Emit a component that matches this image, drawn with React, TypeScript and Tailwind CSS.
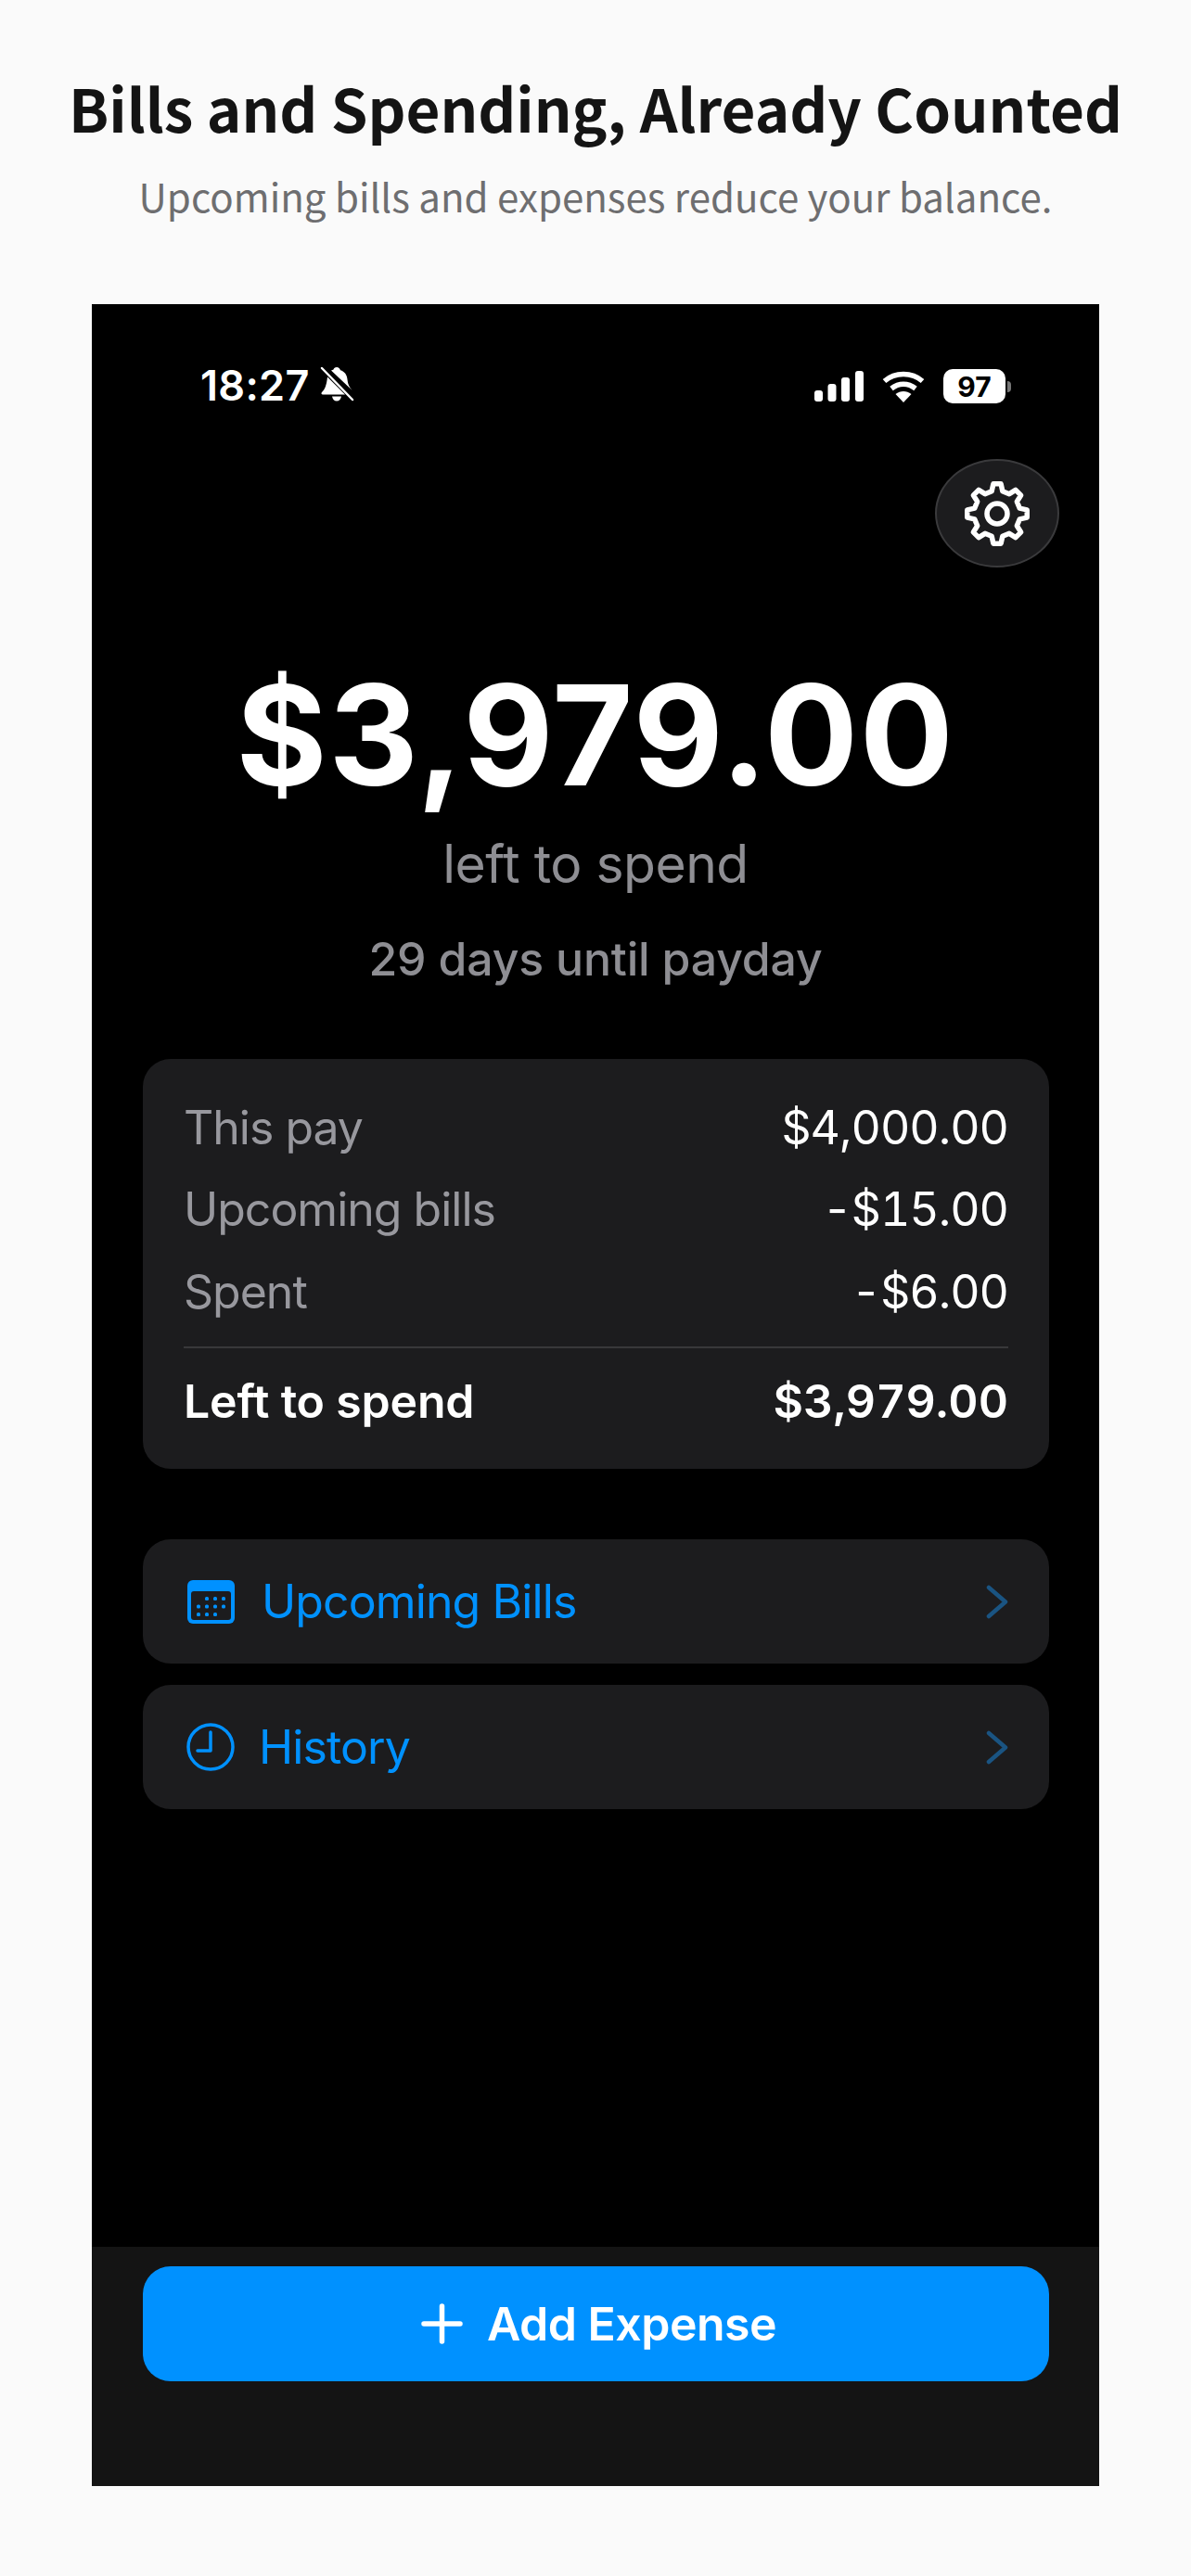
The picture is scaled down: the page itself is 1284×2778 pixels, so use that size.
import React from "react";

const gearPath = (() => {
  const teeth = 8, outer = 32.500, inner = 25, cx = 35, cy = 35;
  const pts: string[] = [];
  for (let i = 0; i < teeth; i++) {
    const a = (i * 2 * Math.PI) / teeth - Math.PI / 2;
    const step = (2 * Math.PI) / teeth;
    const p = (r: number, t: number) => `${(cx + r * Math.cos(t)).toFixed(2)} ${(cy + r * Math.sin(t)).toFixed(2)}`;
    pts.push(`${i === 0 ? "M" : "L"}${p(inner, a - step * 0.3)}`);
    pts.push(`L${p(outer, a - step * 0.16)}`);
    pts.push(`L${p(outer, a + step * 0.16)}`);
    pts.push(`L${p(inner, a + step * 0.3)}`);
  }
  return pts.join(" ") + " Z";
})();

const Gear = () => (
  <svg width="70" height="70" viewBox="0 0 70 70" fill="none" stroke="#fff" strokeWidth="5.500" strokeLinejoin="round">
    <path d={gearPath} />
    <circle cx="35" cy="35" r="11" />
  </svg>
);

const BellOff = () => (
  <svg width="37" height="38" viewBox="0 0 37 38">
    <path fill="#fff" d="M18 1c2 0 3.500 1.300 4 3.300 4.500 1.300 7 5 7.500 10 .4 5 2 8 5 11.500L12 4.500C13 4 14 3.800 14.500 3.500 15 2 16 1 18 1ZM8 11.500 27 30.500H3C1.500 30.500 1 29 2 28c3-3 5-7 6-16.500ZM13 32.500h10c-.5 3-2.500 5-5 5s-4.500-2-5-5Z" />
    <path stroke="#fff" strokeWidth="2.500" strokeLinecap="round" d="M2 2 35 36" />
  </svg>
);

const Signal = () => (
  <svg width="53" height="33" viewBox="0 0 53 33" fill="#fff">
    <rect x="0" y="21" width="9" height="12" rx="3" />
    <rect x="14.500" y="14" width="9" height="19" rx="3" />
    <rect x="29" y="7" width="9" height="26" rx="3" />
    <rect x="44" y="0" width="9" height="33" rx="3" />
  </svg>
);

const Wifi = () => (
  <svg width="46" height="34" viewBox="0 0 46 34" fill="none" stroke="#fff" strokeWidth="5.500">
    <path d="M2.500 11C14 1 32 1 43.500 11" />
    <path d="M10 19c8-6.500 18-6.500 26 0" />
    <path fill="#fff" stroke="none" d="M23 34 14.500 25c5-4 12-4 17 0Z" />
  </svg>
);

const Calendar = () => (
  <svg className="ml-[1px]" width="51" height="47" viewBox="0 0 51 47">
    <path fill="#0091ff" d="M6 0h39a6 6 0 0 1 6 6v35a6 6 0 0 1-6 6H6a6 6 0 0 1-6-6V6a6 6 0 0 1 6-6Z" />
    <rect x="4" y="12" width="43" height="31" rx="3" fill="#1c1c1e" />
    {[
      [19, 18], [28, 18], [37, 18],
      [10, 26.500], [19, 26.500], [28, 26.500], [37, 26.500],
      [10, 35], [19, 35], [28, 35],
    ].map(([x, y]) => (
      <rect key={`${x}-${y}`} x={x} y={y} width="4" height="4" rx="1.500" fill="#0091ff" />
    ))}
  </svg>
);

const Clock = () => (
  <svg width="52" height="52" viewBox="0 0 52 52" fill="none" stroke="#0091ff" strokeWidth="3.500" strokeLinecap="round" strokeLinejoin="round">
    <circle cx="26" cy="26" r="24" />
    <path d="M26 10v20H12" />
  </svg>
);

const Chevron = () => (
  <svg width="24" height="37" viewBox="0 0 24 37" fill="none" stroke="#1a5482" strokeWidth="4.500" strokeLinecap="round" strokeLinejoin="round">
    <path d="M3 3 21 18.500 3 34" />
  </svg>
);

const Plus = () => (
  <svg width="45" height="44" viewBox="0 0 45 44" fill="none" stroke="#fff" strokeWidth="5.500" strokeLinecap="round">
    <path d="M22.500 3v38M3 22h39" />
  </svg>
);

const inter = "font-['Inter',sans-serif]";

const Row = ({ label, value }: { label: string; value: string }) => (
  <div className="flex h-[88.500px] items-center justify-between">
    <span className="text-[50px] font-normal tracking-[-1px] text-[#98989e]">{label}</span>
    <span className="text-[50px] font-normal tabular-nums tracking-[-1px] text-white">{value}</span>
  </div>
);

const NavCard = ({ icon, label, gap }: { icon: React.ReactNode; label: string; gap: string }) => (
  <div className="flex h-[134px] items-center rounded-[30px] bg-[#1c1c1e] pl-[47px] pr-[44px]">
    {icon}
    <span className={`${gap} text-[50px] tracking-[-0.900px] text-[#0091ff]`}>{label}</span>
    <span className="ml-auto flex">
      <Chevron />
    </span>
  </div>
);

export default function App() {
  return (
    <div className="flex h-[2778px] w-[1284px] flex-col items-center overflow-hidden bg-[#fafafa]">
      <div className="flex flex-col items-center font-['Noto_Sans_CJK_SC','Noto_Sans',sans-serif]">
        <h1 className="mt-[68px] whitespace-nowrap text-[63.700px] font-bold leading-[95px] text-[#141414]">
          Bills and Spending, Already Counted
        </h1>
        <p className="mt-[16px] whitespace-nowrap text-[42px] font-normal leading-[64px] text-[#6e6e70]">
          Upcoming bills and expenses reduce your balance.
        </p>
      </div>

      <div className={`${inter} mt-[85px] flex h-[2353px] w-[1086px] flex-col bg-black`}>
        <div className="flex h-[168px] shrink-0 items-start pl-[117px] pr-[95px] pt-[61px]">
          <span className="text-[45px] font-semibold leading-[54px] tracking-[0.300px] text-white">18:27</span>
          <span className="ml-[11px] mt-[6px] flex">
            <BellOff />
          </span>
          <span className="ml-auto flex items-center gap-[20px] pt-[9px]">
            <Signal />
            <Wifi />
            <span className="flex items-center">
              <span className="flex h-[37px] w-[67px] items-center justify-center rounded-[10px] bg-white text-[30px] font-bold leading-none text-black">97</span>
              <span className="ml-[2px] h-[12px] w-[4px] rounded-r-full bg-[#777]" />
            </span>
          </span>
        </div>

        <div className="-mt-[1px] flex justify-end pr-[43px]">
          <div className="flex h-[117px] w-[134px] items-center justify-center rounded-[50%] border-2 border-[#3a3a3c] bg-[#1c1c1e]">
            <Gear />
          </div>
        </div>

        <div className="mt-[101px] flex flex-col items-center">
          <div className="text-[150px] font-bold leading-[160px] tracking-[1.500px] text-white">$3,979.00</div>
          <div className="mt-[26px] text-[57px] font-normal leading-[66px] tracking-[-0.500px] text-[#8e8e93]">left to spend</div>
          <div className="mt-[41px] text-[50px] font-medium leading-[56px] tracking-[-0.200px] text-[#8e8e93]">29 days until payday</div>
        </div>

        <div className="ml-[55px] mr-[54px] mt-[80px] flex h-[442px] flex-col rounded-[30px] bg-[#1c1c1e] pl-[44px] pr-[44px] pt-[30px]">
          <Row label="This pay" value="$4,000.00" />
          <Row label="Upcoming bills" value="-$15.00" />
          <Row label="Spent" value="-$6.00" />
          <div className="mt-[14px] h-[2px] bg-[#38383a]" />
          <div className="flex h-[115px] items-center justify-between">
            <span className="text-[50px] font-semibold tracking-[-0.200px] text-white">Left to spend</span>
            <span className="text-[50px] font-semibold tabular-nums tracking-[0px] text-white">$3,979.00</span>
          </div>
        </div>

        <div className="ml-[55px] mr-[54px] mt-[76px] flex flex-col gap-[23px]">
          <NavCard icon={<Calendar />} label="Upcoming Bills" gap="ml-[29px]" />
          <NavCard icon={<Clock />} label="History" gap="ml-[26px]" />
        </div>

        <div className="mt-auto h-[258px] bg-[#141414] pl-[55px] pr-[54px] pt-[21px]">
          <div className="flex h-[124px] items-center justify-center rounded-[30px] bg-[#0091ff] pl-[6px]">
            <Plus />
            <span className="ml-[26px] text-[50px] font-semibold tracking-[-0.500px] text-white">Add Expense</span>
          </div>
        </div>
      </div>
    </div>
  );
}
